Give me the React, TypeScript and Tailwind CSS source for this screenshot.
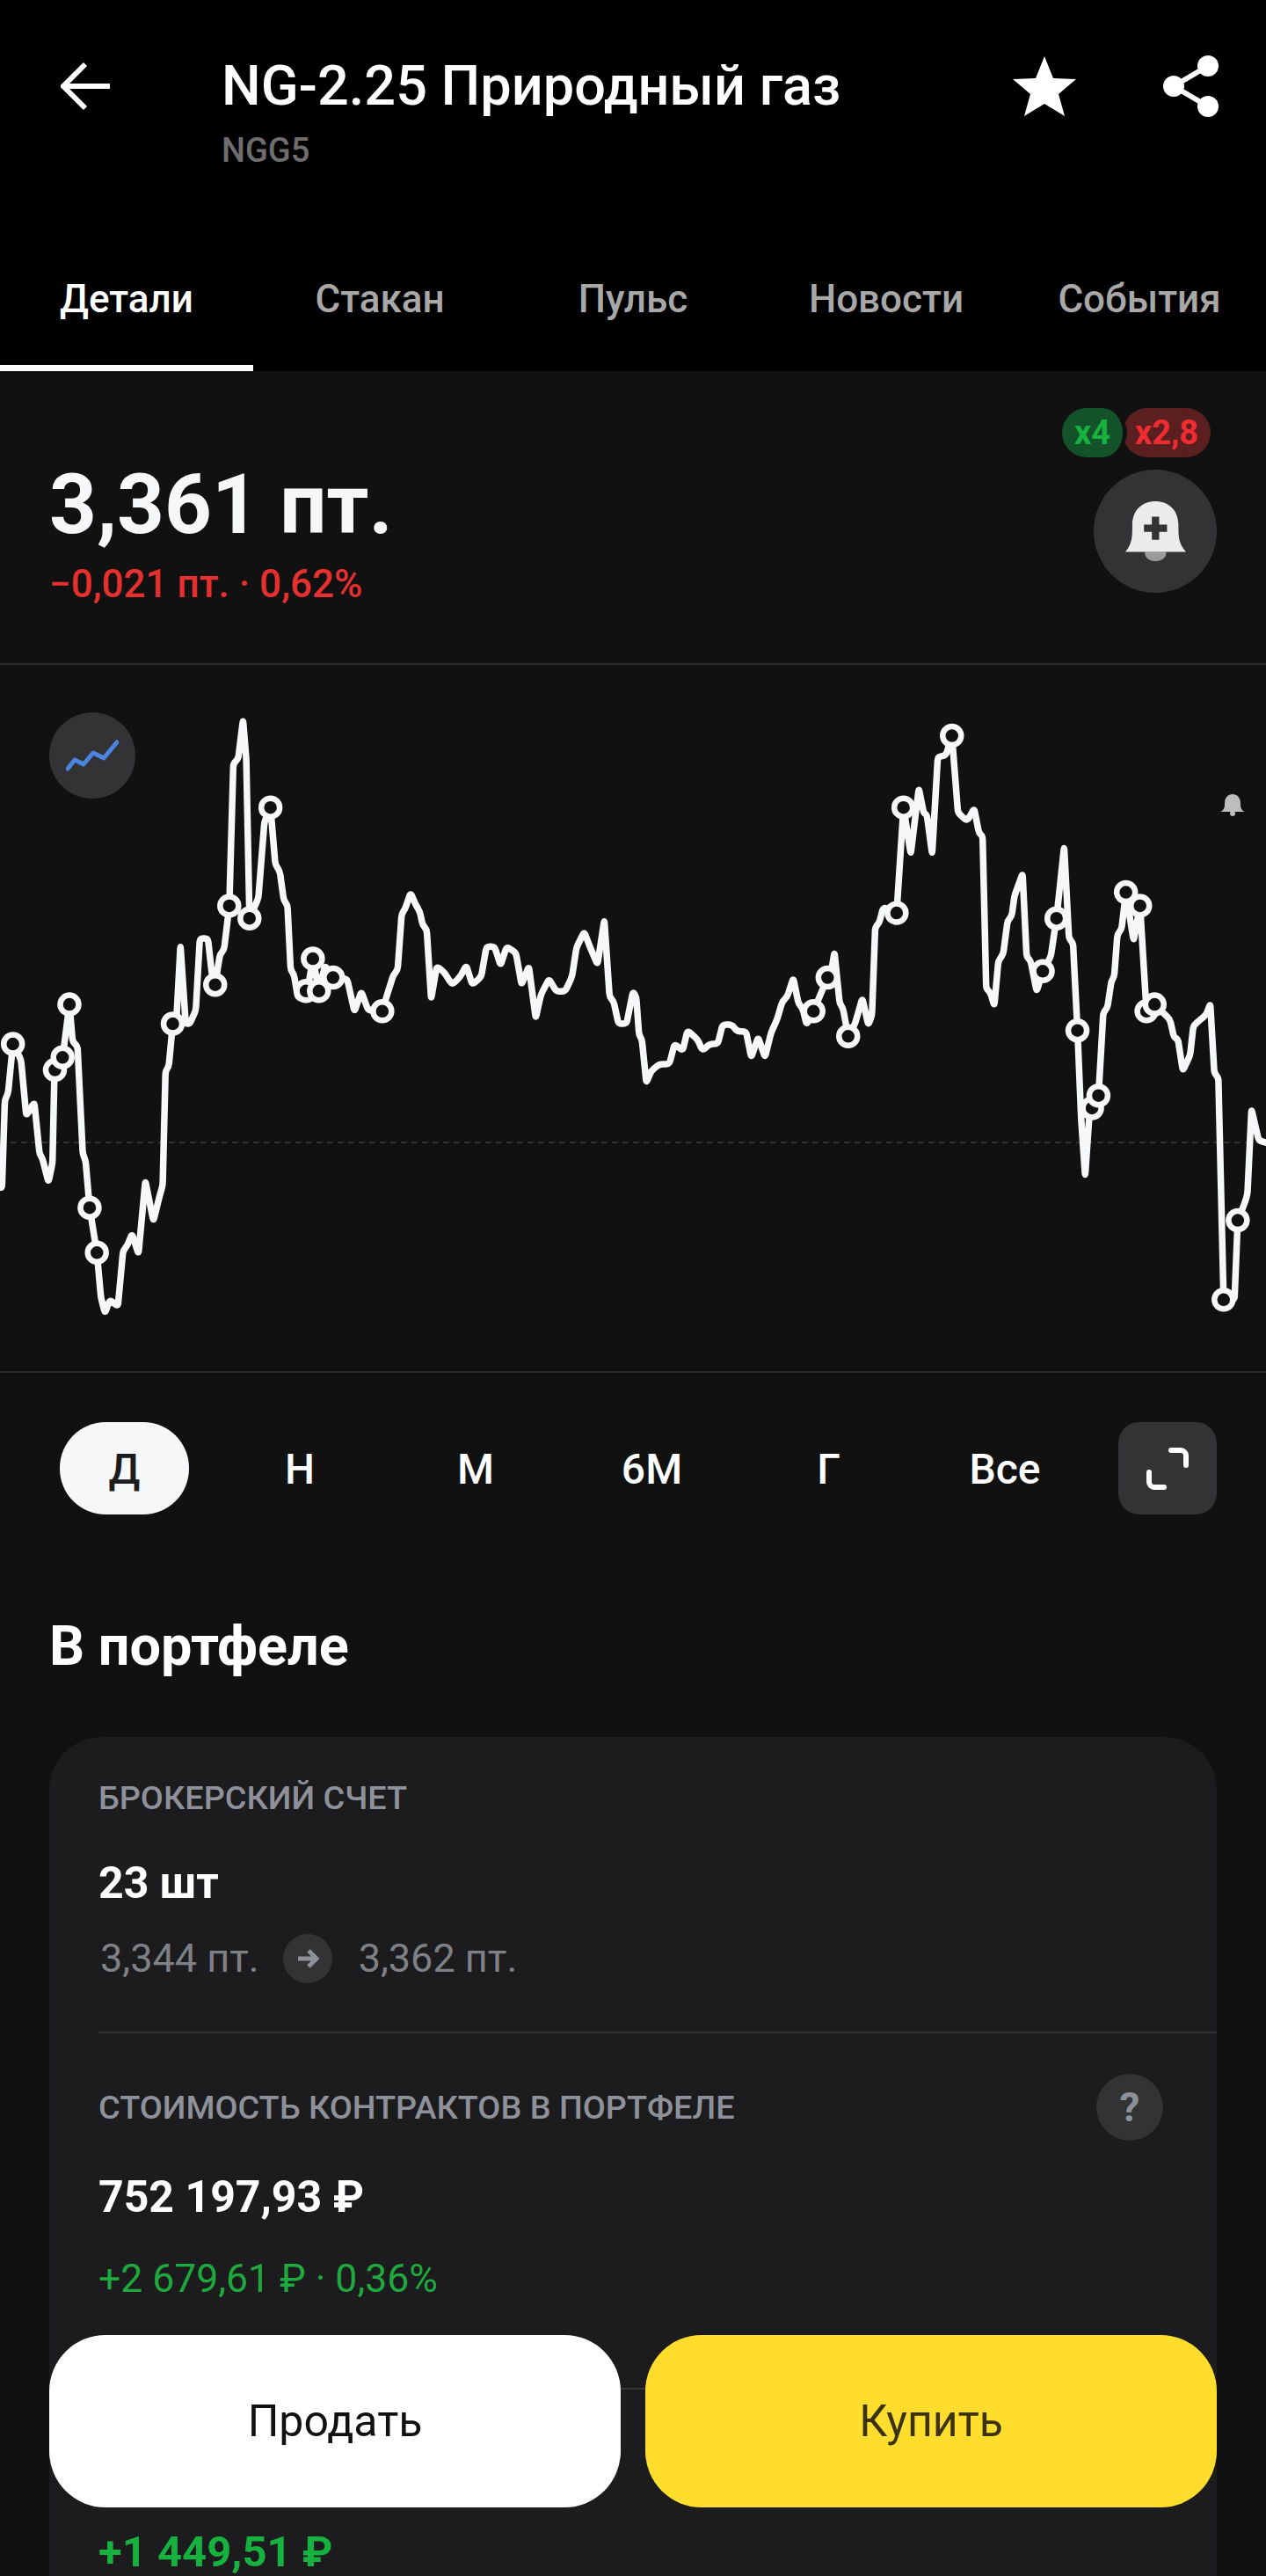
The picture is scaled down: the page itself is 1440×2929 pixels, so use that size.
import { ReactNode } from "react";

const font = { fontFamily: "Roboto, 'Noto Sans', sans-serif" };

// chart points as read off the reference, left half and right half
const leftPts = [
  [0,1155],[5,1155],[12,960],[20,945],[32,835],[52,870],[65,995],[85,965],[98,1080],[105,1090],[120,1143],[130,1100],[135,895],[155,865],[172,747],[180,830],[192,840],[205,1080],[212,1095],[222,1200],[240,1300],[250,1400],[260,1435],[272,1405],[292,1420],[305,1295],[315,1285],[327,1258],[343,1303],[360,1140],[380,1230],[395,1175],[403,1150],[410,895],[418,885],[428,790],[437,780],[447,615],[460,790],[470,790],[485,760],[495,600],[515,600],[525,680],[533,703],[545,635],[555,625],[568,527],[578,210],[590,200],[602,112],[610,200],[618,555],[640,510],[655,340],[670,308],[682,435],[693,450],[703,515],[712,525],[720,670],[728,680],[738,732],[758,735],[775,645],[790,717],[805,660],[825,687],[860,690],[878,763],[895,718],[912,760],[947,762],[960,722],[975,680],[985,670],[995,545],[1003,535],[1017,498],[1030,525],[1040,540],[1047,570],[1057,580],[1068,735],[1082,662],[1100,675],[1120,703],[1140,685],[1155,660],[1170,703],[1192,685],[1205,618],[1225,618],[1240,660],[1255,618],[1278,632],[1292,703],[1310,662],[1327,778],[1340,725],[1360,690],[1378,718],[1400,718],[1417,685],[1428,620],[1447,585],[1462,620],[1480,658],[1497,558],[1510,730],[1520,740],[1532,790],[1552,790],[1568,718],
];
const rightPts = [
  [8,730],[15,815],[22,825],[33,922],[45,895],[65,880],[90,880],[103,835],[123,850],[135,805],[160,825],[172,850],[190,835],[210,835],[222,792],[245,792],[258,807],[280,807],[293,865],[310,820],[327,865],[342,810],[357,780],[370,740],[382,730],[397,688],[410,745],[420,755],[430,792],[447,762],[482,687],[490,680],[499,630],[512,745],[520,755],[533,818],[550,790],[568,733],[583,793],[592,770],[600,575],[610,565],[620,530],[653,543],[670,308],[688,412],[708,265],[720,320],[728,325],[741,412],[755,195],[775,192],[790,148],[805,320],[828,338],[845,310],[857,365],[866,372],[875,712],[885,720],[895,750],[905,650],[917,635],[928,560],[938,550],[945,505],[965,455],[975,640],[985,650],[1000,718],[1015,673],[1035,640],[1049,555],[1068,395],[1080,600],[1090,610],[1101,805],[1110,1000],[1120,1130],[1130,1000],[1137,978],[1153,950],[1165,765],[1175,755],[1185,695],[1192,685],[1200,590],[1210,580],[1221,497],[1240,605],[1256,527],[1272,762],[1292,747],[1330,780],[1340,820],[1350,825],[1362,895],[1380,860],[1388,795],[1400,785],[1420,770],[1430,745],[1440,900],[1450,910],[1463,1405],[1490,1405],[1498,1228],[1515,1190],[1522,1170],[1532,980],[1550,1050],[1568,1055],
];
const leftDots = [[32,835],[136,893],[155,865],[172,747],[222,1200],[240,1300],[428,790],[533,703],[568,527],[618,555],[670,308],[758,717],[775,645],[790,717],[825,687],[947,762]];
const rightDots = [[447,762],[482,687],[533,818],[653,543],[670,308],[790,148],[1015,673],[1049,555],[1101,805],[1137,978],[1153,950],[1221,497],[1256,527],[1272,762],[1292,747],[1463,1405],[1498,1228]];

const sx = 720 / 1568;
const sy = 800 / 1568;
const toL = ([x, y]: number[]) => [x * sx, 5 + y * sy];
const toR = ([x, y]: number[]) => [720 + x * sx, 5 + y * sy];
const pts = [...leftPts.map(toL), ...rightPts.map(toR)];
const dots = [...leftDots.map(toL), ...rightDots.map(toR)];

// rounds every corner of the line a little, peaks in the chart are soft
function smooth(p: number[][], r: number) {
  let d = `M${p[0][0]} ${p[0][1]}`;
  for (let i = 1; i < p.length - 1; i++) {
    const [x, y] = p[i];
    const [ax, ay] = p[i - 1];
    const [bx, by] = p[i + 1];
    const la = Math.hypot(ax - x, ay - y);
    const lb = Math.hypot(bx - x, by - y);
    const ta = Math.min(r, la / 2) / la;
    const tb = Math.min(r, lb / 2) / lb;
    d += ` L${x + (ax - x) * ta} ${y + (ay - y) * ta} Q${x} ${y} ${x + (bx - x) * tb} ${y + (by - y) * tb}`;
  }
  const last = p[p.length - 1];
  return `${d} L${last[0]} ${last[1]}`;
}

function Share() {
  return (
    <svg width="66" height="72" viewBox="0 0 66 72">
      <path d="M52 13 L13 36 L52 59" fill="none" stroke="#fff" strokeWidth="6" />
      <circle cx="52" cy="13" r="12" fill="#fff" />
      <circle cx="13" cy="36" r="12" fill="#fff" />
      <circle cx="52" cy="59" r="12" fill="#fff" />
    </svg>
  );
}

function Tab({ label, active }: { label: string; active?: boolean }) {
  return (
    <div className={`relative flex h-[128px] w-[288px] items-start justify-center pt-[13px] text-[44px] font-medium ${active ? "text-white" : "text-[#a8a8a8]"}`}>
      {label}
      {active && <div className="absolute bottom-0 left-0 h-[7px] w-full bg-white" />}
    </div>
  );
}

function Range({ label, width }: { label: string; width: string }) {
  return <div className={`flex h-[105px] items-center justify-center pt-[2px] text-[48px] font-medium text-white ${width}`}>{label}</div>;
}

function Label({ children }: { children: ReactNode }) {
  return <div className="text-[37.8px] font-medium leading-[46px] text-[#8e9199]">{children}</div>;
}

export default function App() {
  return (
    <div style={font} className="relative h-[2929px] w-[1440px] overflow-hidden bg-[#111112]">
      <header className="h-[422px] bg-black">
        <div className="flex h-[294px] items-start pl-[69px] pr-[52px] pt-[64px]">
          <svg width="57" height="56" viewBox="0 0 57 56" className="mt-[6px]">
            <path d="M56 28 H4 M28 3 L3 28 L28 53" fill="none" stroke="#fff" strokeWidth="6" />
          </svg>
          <div className="ml-[126px] flex-1">
            <div className="text-[63px] font-medium leading-[68px] text-white">NG-2.25 Природный газ</div>
            <div className="mt-[17px] text-[38px] font-medium leading-[44px] text-[#6e6e6e]">NGG5</div>
          </div>
          <svg width="72" height="68" viewBox="0 0 72 68">
            <path d="M36 0 L46 25 L72 26 L52 43 L59 68 L36 54 L13 68 L20 43 L0 26 L26 25 Z" fill="#fff" />
          </svg>
          <div className="ml-[98px] -mt-[2px]">
            <Share />
          </div>
        </div>
        <nav className="flex">
          <Tab label="Детали" active />
          <Tab label="Стакан" />
          <Tab label="Пульс" />
          <Tab label="Новости" />
          <Tab label="События" />
        </nav>
      </header>

      <section className="relative h-[334px] border-b-2 border-[#2b2b2d] px-[56px] pt-[98px]">
        <div className="text-[94px] font-bold leading-[108px] text-[#f6f7f8]">3,361 пт.</div>
        <div className="mt-[11px] text-[44px] font-medium leading-[50px] text-[#e5302f]">−0,021 пт. · 0,62%</div>
        <div className="absolute right-[56px] top-[42px] flex flex-col items-end">
          <div className="mr-[7px] flex items-center">
            <div className="z-10 flex h-[56px] w-[74px] items-center justify-center rounded-[28px] border-r-[5px] border-[#111112] bg-[#145229] text-[38px] font-bold text-[#16b13e]">x4</div>
            <div className="flex h-[56px] w-[100px] -ml-[5px] items-center justify-center rounded-[28px] bg-[#5c1f20] text-[38px] font-bold text-[#ee2d33]">x2,8</div>
          </div>
          <div className="mt-[14px] flex h-[140px] w-[140px] items-center justify-center rounded-full bg-[#333335]">
            <svg width="73" height="72" viewBox="100 105 220 215">
              <path d="M173 283 h73 v5 a36 27 0 0 1 -73 0 Z" fill="#9a9a9a" />
              <path d="M106 283 C130 255 130 230 130 190 C130 140 165 110 209 110 C253 110 288 140 288 190 C288 230 288 255 314 283 Z" fill="#ebebeb" />
              <path d="M197 163 h25 v27 h27 v25 h-27 v27 h-25 v-27 h-27 v-25 h27 Z" fill="#333335" />
            </svg>
          </div>
        </div>
      </section>

      <section className="relative h-[805px] border-b-2 border-[#2b2b2d]">
        <svg width="1440" height="803" viewBox="0 0 1440 803" className="block">
          <line x1="0" y1="543" x2="1440" y2="543" stroke="#3a3a3c" strokeWidth="1.5" strokeDasharray="7 5" />
          <path d={smooth(pts, 4)} fill="none" stroke="#f6f7f8" strokeWidth="7.5" strokeLinejoin="round" strokeLinecap="round" />
          {dots.map(([x, y], i) => (
            <circle key={i} cx={x} cy={y} r="10.5" fill="#111112" stroke="#f6f7f8" strokeWidth="6.5" />
          ))}
        </svg>
        <div className="absolute left-[56px] top-[54px] flex h-[98px] w-[98px] items-center justify-center rounded-full bg-[#333335]">
          <svg width="60" height="36" viewBox="0 0 60 36">
            <path d="M2 33 L10 23 L20 28 L31 15 L43 21 L58 3" fill="none" stroke="#4a85e0" strokeWidth="5" strokeLinecap="round" strokeLinejoin="round" />
          </svg>
        </div>
        <svg width="28" height="26" viewBox="0 0 28 26" className="absolute left-[1388px] top-[147px]">
          <path d="M0 20 C5 18 5 14 5 10 C5 4 9 0 14 0 C19 0 23 4 23 10 C23 14 23 18 28 20 Z" fill="#bdbdbd" />
          <circle cx="14" cy="22" r="3" fill="#bdbdbd" />
        </svg>
      </section>

      <section className="flex items-center pl-[68px] pr-[56px] pt-[56px]">
        <div className="flex h-[105px] w-[147px] items-center justify-center rounded-[52px] bg-[#f6f7f8] pt-[2px] text-[48px] font-medium text-[#1c1c1e]">Д</div>
        <div className="ml-[26px] flex">
          <Range label="Н" width="w-[200px]" />
          <Range label="М" width="w-[200px]" />
          <Range label="6М" width="w-[201px]" />
          <Range label="Г" width="w-[201px]" />
          <Range label="Все" width="w-[200px]" />
        </div>
        <div className="ml-auto flex h-[105px] w-[112px] items-center justify-center rounded-[24px] bg-[#333335]">
          <svg width="48" height="48" viewBox="0 0 48 48">
            <path d="M28 3 H39 A6 6 0 0 1 45 9 V20 M3 28 V39 A6 6 0 0 0 9 45 H20" fill="none" stroke="#fff" strokeWidth="6" strokeLinecap="round" />
          </svg>
        </div>
      </section>

      <h2 className="mt-[116px] px-[56px] text-[63px] font-bold leading-[68px] text-white">В портфеле</h2>

      <section className="mt-[69px] mx-[56px] h-[1100px] rounded-[60px] bg-[#1c1c1e] pl-[56px] pt-[46px]">
        <Label>БРОКЕРСКИЙ СЧЕТ</Label>
        <div className="mt-[46px] text-[50px] font-bold leading-[56px] text-white">23 шт</div>
        <div className="mt-[30px] flex h-[56px] items-center text-[45px] text-[#7f8086]">
          <span className="ml-[2px]">3,344 пт.</span>
          <div className="ml-[27px] flex h-[56px] w-[56px] items-center justify-center rounded-full bg-[#333335]">
            <svg width="28" height="26" viewBox="0 0 28 26">
              <path d="M3 13 H24 M15 4 L24 13 L15 22" fill="none" stroke="#8e9199" strokeWidth="5" />
            </svg>
          </div>
          <span className="ml-[30px]">3,362 пт.</span>
        </div>
        <div className="mt-[55px] h-[2px] bg-[#333335]" />
        <div className="mt-[45px] flex h-[78px] items-center justify-between pr-[61px]">
          <Label>СТОИМОСТЬ КОНТРАКТОВ В ПОРТФЕЛЕ</Label>
          <div className="flex h-[76px] w-[76px] items-center justify-center rounded-full bg-[#333335] text-[46px] font-bold text-[#8e9199]">?</div>
        </div>
        <div className="mt-[35px] text-[50px] font-bold leading-[56px] text-white">752 197,93 ₽</div>
        <div className="mt-[40px] text-[44.5px] leading-[50px] text-[#1fa83d]">+2 679,61 ₽ · 0,36%</div>
        <div className="mt-[99px] h-[2px] bg-[#333335]" />
        <div className="mt-[157px] text-[49px] font-bold leading-[56px] text-[#16b13e]">+1 449,51 ₽</div>
      </section>

      <div className="absolute left-[56px] top-[2655px] flex w-[1328px] gap-[28px]">
        <button className="flex h-[196px] flex-1 items-center justify-center rounded-[64px] bg-white text-[50px] text-[#111]">Продать</button>
        <button className="flex h-[196px] flex-1 items-center justify-center rounded-[64px] bg-[#ffdd2d] text-[50px] text-[#3a3210]">Купить</button>
      </div>
    </div>
  );
}
